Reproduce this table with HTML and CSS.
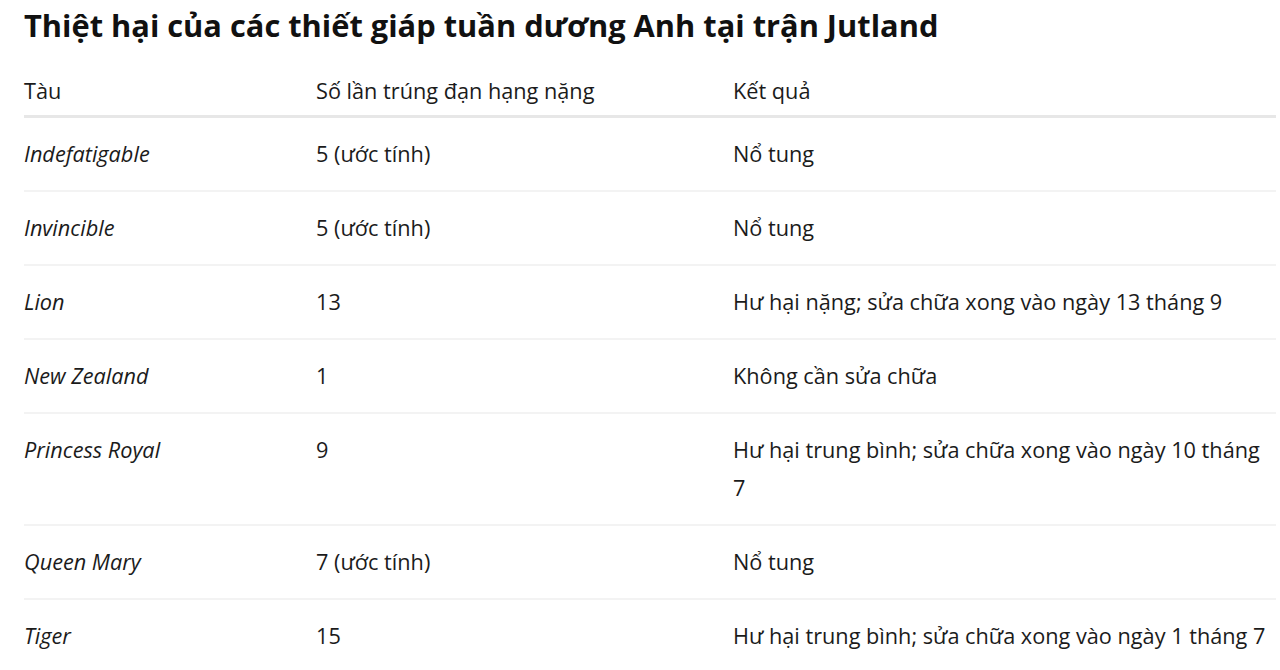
FILE: index.html
```html
<!DOCTYPE html>
<html lang="vi">
<head>
<meta charset="utf-8">
<title>Thiệt hại của các thiết giáp tuần dương Anh tại trận Jutland</title>
<link rel="stylesheet" href="styles.css">
</head>
<body>
<main class="page">
  <h2 class="title">Thiệt hại của các thiết giáp tuần dương Anh tại trận Jutland</h2>
  <table class="damage">
    <colgroup>
      <col class="c-ship">
      <col class="c-hits">
      <col class="c-result">
    </colgroup>
    <thead>
      <tr><th>Tàu</th><th>Số lần trúng đạn hạng nặng</th><th>Kết quả</th></tr>
    </thead>
    <tbody>
      <tr><td><i>Indefatigable</i></td><td>5 (ước tính)</td><td>Nổ tung</td></tr>
      <tr><td><i>Invincible</i></td><td>5 (ước tính)</td><td>Nổ tung</td></tr>
      <tr><td><i>Lion</i></td><td>13</td><td>Hư hại nặng; sửa chữa xong vào ngày 13 tháng 9</td></tr>
      <tr><td><i>New Zealand</i></td><td>1</td><td>Không cần sửa chữa</td></tr>
      <tr><td><i>Princess Royal</i></td><td>9</td><td>Hư hại trung bình; sửa chữa xong vào ngày 10 tháng 7</td></tr>
      <tr><td><i>Queen Mary</i></td><td>7 (ước tính)</td><td>Nổ tung</td></tr>
      <tr><td><i>Tiger</i></td><td>15</td><td>Hư hại trung bình; sửa chữa xong vào ngày 1 tháng 7</td></tr>
    </tbody>
  </table>
</main>
</body>
</html>
```

FILE: styles.css
```css
html, body {
  margin: 0;
  padding: 0;
  background: #ffffff;
}

body {
  font-family: "Open Sans", "Noto Sans", sans-serif;
  color: #1b1b1b;
}

.page {
  padding: 5px 4px 0 24px;
}

.title {
  margin: 0 0 27px 0;
  font-size: 30.8px;
  line-height: 40px;
  font-weight: 700;
  color: #111111;
}

.damage {
  width: 1252px;
  border-collapse: collapse;
  table-layout: fixed;
  font-size: 21.7px;
  line-height: 38px;
}

.c-ship { width: 292px; }
.c-hits { width: 417px; }
.c-result { width: 543px; }

.damage th {
  text-align: left;
  font-weight: 400;
  padding: 0 10px 5px 0;
  border-bottom: 3px solid #e7e7e7;
  vertical-align: top;
}

.damage td {
  padding: 17px 10px 17px 0;
  border-bottom: 2px solid #f3f3f3;
  vertical-align: top;
}

.damage td:last-child,
.damage th:last-child {
  padding-right: 5px;
}
```
